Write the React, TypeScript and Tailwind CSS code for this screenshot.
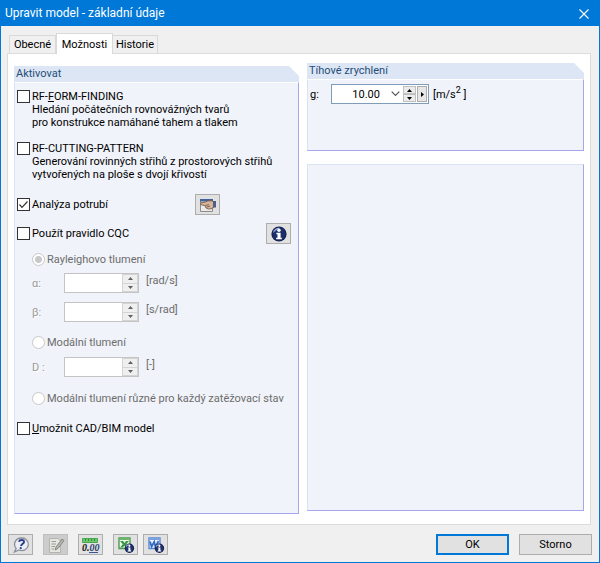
import { useState, type ReactNode } from "react";

function Group({ title, className = "", children }: { title?: string; className?: string; children?: ReactNode }) {
  return (
    <section className={`flex flex-col ${className}`}>
      {title && (
        <h2 className="h-4 bg-[#dde6f4] pl-[2px] leading-4 text-[#1f4e79] [clip-path:polygon(0_0,calc(100%-10px)_0,100%_10px,100%_100%,0_100%)]">
          {title}
        </h2>
      )}
      <div
        className={`flex-1 border-r border-b border-l border-r-[#a6a6ea] border-b-[#a6a6ea] border-l-[#d9e4f3] bg-[#f0f3f9] ${
          title ? "border-t border-t-white" : "border-t border-t-[#d9e4f3]"
        }`}
      >
        {children}
      </div>
    </section>
  );
}

function Check({ id, defaultChecked = false, children }: { id: string; defaultChecked?: boolean; children: ReactNode }) {
  const [on, setOn] = useState(defaultChecked);
  return (
    <div className="flex items-start gap-[2px]">
      <span className="grid size-[13px] shrink-0">
        <input
          id={id}
          type="checkbox"
          checked={on}
          onChange={() => setOn(!on)}
          className="col-start-1 row-start-1 size-[13px] appearance-none border border-[#333] bg-white"
        />
        {on && (
          <svg viewBox="0 0 13 13" className="pointer-events-none col-start-1 row-start-1 size-[13px]" aria-hidden="true">
            <path d="M2.5 6.5 L5 9.3 L10.5 3.5" fill="none" stroke="#333" strokeWidth="1.2" />
          </svg>
        )}
      </span>
      <label htmlFor={id} className="leading-[13px] whitespace-nowrap">
        {children}
      </label>
    </div>
  );
}

function Radio({ id, defaultChecked, children }: { id: string; defaultChecked?: boolean; children: ReactNode }) {
  return (
    <div className="flex items-center gap-[2px] text-[#6d6d6d]">
      <input
        id={id}
        type="radio"
        name="damping"
        disabled
        defaultChecked={defaultChecked}
        className="size-[13px] shrink-0 appearance-none rounded-full border border-[#c8c8c8] bg-white checked:bg-[radial-gradient(circle,#c8c8c8_3px,#fff_4px)]"
      />
      <label htmlFor={id} className="leading-[13px] whitespace-nowrap">
        {children}
      </label>
    </div>
  );
}

function Arrow({ up = false, color }: { up?: boolean; color: string }) {
  return (
    <svg viewBox="0 0 5 3" className="h-[3px] w-[5px]" aria-hidden="true">
      <path d={up ? "M0 3 L2.5 0 L5 3Z" : "M0 0 L2.5 3 L5 0Z"} fill={color} />
    </svg>
  );
}

function DisabledField({ id, label, unit }: { id: string; label: string; unit: string }) {
  return (
    <div className="flex h-5 items-center">
      <label htmlFor={id} className="w-8 text-[#9a9a9a] [text-shadow:1px_1px_0_#fff]">
        {label}
      </label>
      <div className="flex h-5 w-[75px] border border-[#c4c4c4] bg-white">
        <input id={id} disabled className="w-0 flex-1 bg-white px-1" />
        <div className="flex w-4 flex-col gap-px bg-[#d4d4d4] p-px">
          <button type="button" disabled aria-label="+" className="flex flex-1 items-center justify-center bg-[#efefef]">
            <Arrow up color="#606060" />
          </button>
          <button type="button" disabled aria-label="-" className="flex flex-1 items-center justify-center bg-[#efefef]">
            <Arrow color="#606060" />
          </button>
        </div>
      </div>
      <span className="self-start pl-[7px] leading-4 text-[#6d6d6d]">{unit}</span>
    </div>
  );
}

function ToolButton({ label, disabled, children }: { label: string; disabled?: boolean; children: ReactNode }) {
  return (
    <button
      type="button"
      aria-label={label}
      disabled={disabled}
      className="flex h-[21px] w-[25px] shrink-0 items-center justify-center border border-[#adadad] bg-[#e1e1e1] disabled:border-[#bfbfbf] disabled:bg-[#cccccc]"
    >
      {children}
    </button>
  );
}

function InfoBall({ x, y, r }: { x: number; y: number; r: number }) {
  return (
    <g transform={`translate(${x} ${y}) scale(${r / 8})`}>
      <circle r="8" fill="#0f1d4c" />
      <circle r="7" fill="#1d2f6b" />
      <path d="M-6.5 -1 A6.5 6.5 0 0 1 1 -6.4 Q-4 -4 -6.5 -1Z" fill="#9aa9d6" />
      <circle cy="-4" r="1.8" fill="#fff" />
      <path d="M-2.8 -1.4 H1.7 V4 H3 V5.6 H-3 V4 H-1.6 V0.2 H-2.8Z" fill="#fff" />
    </g>
  );
}

function HandIcon() {
  return (
    <svg viewBox="0 0 18 16" className="h-4 w-[18px]" aria-hidden="true">
      <path d="M1.5 2.5 H13.5 V14.5 H1.5Z" fill="#e9e9ea" stroke="#8d8d8d" />
      <path d="M1 2 H14 V4.5 H1Z" fill="#44609a" />
      <path d="M1.5 6.6 Q1.5 5.6 3 5.6 L6 5.2 L9 3.8 L13 3.8 L15 5 V10 L12 11.8 Q9 12.6 7 11 L6 8.6 L3 8 Q1.5 7.8 1.5 6.6Z" fill="#d6b399" stroke="#6f5140" strokeWidth=".8" />
      <path d="M6.5 8.4 L10 7.6 M7.5 10 L11 9.2" stroke="#6f5140" strokeWidth=".8" />
      <path d="M14 4 H17 V10.5 H14Z" fill="#4c5f8b" />
    </svg>
  );
}

function HelpIcon() {
  return (
    <svg viewBox="0 0 18 18" className="size-[18px]" aria-hidden="true">
      <path d="M9.3 2 A6.6 6.3 0 1 1 7 14 L2.5 16 L4.2 12.4 A6.6 6.3 0 0 1 9.3 2Z" fill="#eceef4" stroke="#8b8e97" strokeWidth="1.3" />
      <path d="M6.9 5.8 Q7.4 4 9.6 4 Q12.2 4 12 6 Q11.8 7.2 10.4 8 Q9.2 8.8 9 10" fill="none" stroke="#293d8b" strokeWidth="1.9" />
      <circle cx="8.7" cy="12.2" r="1.1" fill="#293d8b" />
    </svg>
  );
}

function NoteIcon() {
  return (
    <svg viewBox="0 0 18 18" className="size-[18px]" aria-hidden="true">
      <path d="M2.5 2.5 H11 L13.5 5 V16.5 H2.5Z" fill="#e6e6e0" stroke="#b4b4ae" />
      <path d="M4.5 5.5 H9 M4.5 8 H9 M4.5 10.5 H8 M4.5 13 H7" stroke="#9c9c98" />
      <path d="M8 14 L9 11 L15 3 L17 4.5 L11 12.5Z" fill="#b5b5b0" stroke="#80807b" strokeWidth=".9" />
    </svg>
  );
}

function DecimalsIcon() {
  return (
    <svg viewBox="0 0 19 18" className="h-[18px] w-[19px]" aria-hidden="true">
      <path d="M1.5 2.5 H16.5 V6.5 H1.5Z" fill="#6fc66b" stroke="#4aa852" />
      <path d="M4.5 3 V5 M7.5 3 V5 M10.5 3 V5 M13.5 3 V5" stroke="#2f8a3a" />
      <path d="M8 16.5 H17" stroke="#3b5592" />
      <text x="1" y="15" fontFamily="Liberation Serif, serif" fontSize="10" fontWeight="bold" fontStyle="italic" fill="#111">
        0.<tspan fill="#2a3e70">00</tspan>
      </text>
    </svg>
  );
}

function ExcelIcon() {
  return (
    <svg viewBox="0 0 18 18" className="size-[18px]" aria-hidden="true">
      <path d="M2 2 H13 V12.5 H2Z" fill="#eef7ec" stroke="#4a9c4d" strokeWidth="1.4" />
      <path d="M2 2 H13 V4 H2Z" fill="#6bb56c" />
      <path d="M3 5 H6 L7.5 7 L9 5 H12 L9 8.2 L11.5 11.4 H8.5 L7.2 9.6 L6 11.4 H3 L5.8 8.2Z" fill="#3b9444" />
      <InfoBall x={12.4} y={12.2} r={4.7} />
    </svg>
  );
}

function WordIcon() {
  return (
    <svg viewBox="0 0 18 18" className="size-[18px]" aria-hidden="true">
      <path d="M2 2 H13 V12.5 H2Z" fill="#eef3fc" stroke="#5b89d2" strokeWidth="1.4" />
      <path d="M2 2 H13 V4 H2Z" fill="#7ba2e0" />
      <path d="M3 5.4 L4.6 10.6 L7.2 5.8 L8.4 10.6 L11.6 5" fill="none" stroke="#346bc5" strokeWidth="1.8" />
      <InfoBall x={12.4} y={12.2} r={4.7} />
    </svg>
  );
}

function Gravity() {
  return (
    <div className="flex items-center pt-1 pl-[2px]">
      <label htmlFor="g" className="w-[21px]">
        <u>g</u>:
      </label>
      <div className="flex h-5 w-[98px] items-stretch border border-[#7f9db9] bg-white">
        <input id="g" defaultValue="10.00" className="w-0 flex-1 bg-white text-right outline-none" />
        <button type="button" aria-label="Vybrat hodnotu" className="flex w-[22px] items-center justify-center pl-2">
          <svg viewBox="0 0 9 6" className="h-[6px] w-[9px]" aria-hidden="true">
            <path d="M.7 .7 L4.5 4.5 L8.3 .7" fill="none" stroke="#555" strokeWidth="1.2" />
          </svg>
        </button>
        <div className="flex w-[26px] gap-px p-px">
          <div className="flex w-[13px] flex-col">
            <button type="button" aria-label="+" className="flex flex-1 items-center justify-center border border-[#c0c0c0] bg-[#ececec]">
              <Arrow up color="#000" />
            </button>
            <button type="button" aria-label="-" className="flex flex-1 items-center justify-center border border-[#c0c0c0] bg-[#ececec]">
              <Arrow color="#000" />
            </button>
          </div>
          <button type="button" aria-label="Další" className="flex flex-1 items-center justify-center border border-[#adadad] bg-[#e6e6e6]">
            <svg viewBox="0 0 3 5" className="h-[5px] w-[3px]" aria-hidden="true">
              <path d="M0 0 L3 2.5 L0 5Z" fill="#000" />
            </svg>
          </button>
        </div>
      </div>
      <span className="pl-1">
        [m/s<sup className="text-[9px] leading-none">2</sup> ]
      </span>
    </div>
  );
}

export default function App() {
  return (
    <main className="flex min-h-screen flex-col border border-[#0078d7] bg-[#f0f0f0] font-[Roboto,sans-serif] text-[11px] leading-[13px] text-black">
      <header className="flex h-[25px] items-center justify-between bg-[#0078d7] pr-[10px] pl-1 text-white">
        <h1 className="text-[12px]">Upravit model - základní údaje</h1>
        <button type="button" aria-label="Zavřít">
          <svg viewBox="0 0 10 10" className="size-[10px]" aria-hidden="true">
            <path d="M.5 .5 L9.5 9.5 M9.5 .5 L.5 9.5" stroke="#fff" strokeWidth="1.1" />
          </svg>
        </button>
      </header>

      <div className="flex flex-1 flex-col py-[7px] pr-[8px] pl-[6px]">
        <nav role="tablist" className="flex items-end pl-[2px]">
          <button type="button" role="tab" aria-selected="false" className="h-[18px] w-[47px] border border-b-0 border-[#d9d9d9]">
            Obecné
          </button>
          <button type="button" role="tab" aria-selected="true" className="z-10 -mb-px h-[21px] w-[57px] border border-b-0 border-[#d9d9d9] bg-white">
            Možnosti
          </button>
          <button type="button" role="tab" aria-selected="false" className="h-[18px] w-[45px] border border-b-0 border-l-0 border-[#d9d9d9]">
            Historie
          </button>
        </nav>

        <div className="grid flex-1 grid-cols-[minmax(0,285fr)_minmax(0,277fr)] gap-2 border border-[#dcdcdc] bg-white px-[6px]">
          <Group title="Aktivovat" className="pt-3 pb-[10px]">
            <form className="flex flex-col px-[2px] pt-[7px]">
              <Check id="form">
                RF-<u>F</u>ORM-FINDING
                <br />
                Hledání počátečních rovnovážných tvarů
                <br />
                pro konstrukce namáhané tahem a tlakem
              </Check>
              <div className="pt-[13px]">
                <Check id="cutting">
                  RF-CUTTING-PATTERN
                  <br />
                  Generování rovinných střihů z prostorových střihů
                  <br />
                  vytvořených na ploše s dvojí křivostí
                </Check>
              </div>
              <div className="mt-[13px] flex items-center justify-between pr-[76px]">
                <Check id="pipe" defaultChecked>
                  Analýza potrubí
                </Check>
                <ToolButton label="Nastavení analýzy potrubí">
                  <HandIcon />
                </ToolButton>
              </div>
              <div className="mt-2 flex items-center justify-between pr-[5px]">
                <Check id="cqc">Použít pravidlo CQC</Check>
                <ToolButton label="Informace">
                  <svg viewBox="0 0 16 16" className="size-4" aria-hidden="true">
                    <InfoBall x={8} y={8} r={7.6} />
                  </svg>
                </ToolButton>
              </div>
              <fieldset className="flex flex-col pt-[9px] pl-[15px]">
                <Radio id="rayleigh" defaultChecked>
                  Rayleighovo tlumení
                </Radio>
                <div className="flex flex-col gap-[9px] pt-[7px] pb-[14px]">
                  <DisabledField id="alpha" label="α:" unit="[rad/s]" />
                  <DisabledField id="beta" label="β:" unit="[s/rad]" />
                </div>
                <Radio id="modal">Modální tlumení</Radio>
                <div className="pt-2 pb-[15px]">
                  <DisabledField id="d" label="D :" unit="[-]" />
                </div>
                <Radio id="modal-each">Modální tlumení různé pro každý zatěžovací stav</Radio>
              </fieldset>
              <div className="pt-[17px]">
                <Check id="cad">
                  <u>U</u>možnit CAD/BIM model
                </Check>
              </div>
            </form>
          </Group>

          <div className="flex flex-col gap-[13px] pt-[9px] pb-[13px]">
            <Group title="Tíhové zrychlení" className="h-[88px]">
              <Gravity />
            </Group>
            <Group className="flex-1" />
          </div>
        </div>

        <footer className="-mr-px flex justify-between pt-[9px] pl-px">
          <div className="flex gap-[10px]">
            <ToolButton label="Nápověda">
              <HelpIcon />
            </ToolButton>
            <ToolButton label="Komentář" disabled>
              <NoteIcon />
            </ToolButton>
            <ToolButton label="Jednotky a desetinná místa">
              <DecimalsIcon />
            </ToolButton>
            <div className="flex gap-[5px]">
              <ToolButton label="Excel">
                <ExcelIcon />
              </ToolButton>
              <ToolButton label="Word">
                <WordIcon />
              </ToolButton>
            </div>
          </div>
          <div className="flex gap-[10px]">
            <button type="button" className="h-[21px] w-[73px] border-2 border-[#0078d7] bg-[#e1e1e1]">
              OK
            </button>
            <button type="button" className="h-[21px] w-[73px] border border-[#adadad] bg-[#e1e1e1]">
              Storno
            </button>
          </div>
        </footer>
      </div>
    </main>
  );
}
